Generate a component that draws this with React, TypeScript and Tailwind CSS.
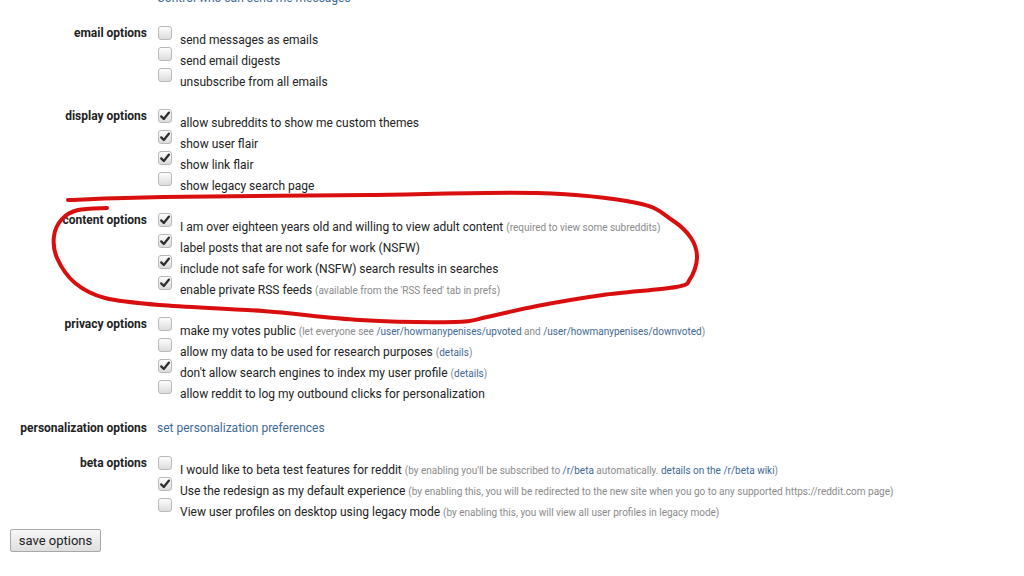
import React from "react";

type Part = { t: string; kind?: "note" | "link" };
type Opt = { checked: boolean; parts: Part[] };
type Section = { label: string; options?: Opt[]; link?: string };

const n = (t: string): Part => ({ t, kind: "note" });
const l = (t: string): Part => ({ t, kind: "link" });

const sections: Section[] = [
  {
    label: "email options",
    options: [
      { checked: false, parts: [{ t: "send messages as emails" }] },
      { checked: false, parts: [{ t: "send email digests" }] },
      { checked: false, parts: [{ t: "unsubscribe from all emails" }] },
    ],
  },
  {
    label: "display options",
    options: [
      { checked: true, parts: [{ t: "allow subreddits to show me custom themes" }] },
      { checked: true, parts: [{ t: "show user flair" }] },
      { checked: true, parts: [{ t: "show link flair" }] },
      { checked: false, parts: [{ t: "show legacy search page" }] },
    ],
  },
  {
    label: "content options",
    options: [
      { checked: true, parts: [{ t: "I am over eighteen years old and willing to view adult content " }, n("(required to view some subreddits)")] },
      { checked: true, parts: [{ t: "label posts that are not safe for work (NSFW)" }] },
      { checked: true, parts: [{ t: "include not safe for work (NSFW) search results in searches" }] },
      { checked: true, parts: [{ t: "enable private RSS feeds " }, n("(available from the 'RSS feed' tab in prefs)")] },
    ],
  },
  {
    label: "privacy options",
    options: [
      {
        checked: false,
        parts: [
          { t: "make my votes public " },
          n("(let everyone see "),
          l("/user/howmanypenises/upvoted"),
          n(" and "),
          l("/user/howmanypenises/downvoted"),
          n(")"),
        ],
      },
      { checked: false, parts: [{ t: "allow my data to be used for research purposes " }, n("("), l("details"), n(")")] },
      { checked: true, parts: [{ t: "don't allow search engines to index my user profile " }, n("("), l("details"), n(")")] },
      { checked: false, parts: [{ t: "allow reddit to log my outbound clicks for personalization" }] },
    ],
  },
  { label: "personalization options", link: "set personalization preferences" },
  {
    label: "beta options",
    options: [
      {
        checked: false,
        parts: [
          { t: "I would like to beta test features for reddit " },
          n("(by enabling you'll be subscribed to "),
          l("/r/beta"),
          n(" automatically. "),
          l("details on the /r/beta wiki"),
          n(")"),
        ],
      },
      {
        checked: true,
        parts: [
          { t: "Use the redesign as my default experience " },
          n("(by enabling this, you will be redirected to the new site when you go to any supported https://reddit.com page)"),
        ],
      },
      {
        checked: false,
        parts: [
          { t: "View user profiles on desktop using legacy mode " },
          n("(by enabling this, you will view all user profiles in legacy mode)"),
        ],
      },
    ],
  },
];

// hand-drawn marker loop, smoothed through these points
const loop: [number, number][] = [
  [68, 200], [163, 197], [370, 195], [537, 193], [637, 203], [672, 220], [691, 238],
  [697, 258], [690, 279], [676, 287], [603, 295], [537, 306], [487, 317], [455, 322],
  [360, 320], [263, 311], [160, 305], [105, 298], [75, 283], [57, 258], [54, 236],
  [62, 219], [78, 210], [107, 208],
];

function smooth(pts: [number, number][]) {
  let d = `M${pts[0][0]} ${pts[0][1]}`;
  for (let i = 0; i < pts.length - 1; i++) {
    const p0 = pts[i - 1] || pts[i];
    const p1 = pts[i];
    const p2 = pts[i + 1];
    const p3 = pts[i + 2] || p2;
    const c1 = [p1[0] + (p2[0] - p0[0]) / 6, p1[1] + (p2[1] - p0[1]) / 6];
    const c2 = [p2[0] - (p3[0] - p1[0]) / 6, p2[1] - (p3[1] - p1[1]) / 6];
    d += ` C${c1[0]} ${c1[1]} ${c2[0]} ${c2[1]} ${p2[0]} ${p2[1]}`;
  }
  return d;
}

function Checkbox({ checked }: { checked: boolean }) {
  return (
    <span className="relative ml-px h-[14px] w-[14px] shrink-0 rounded-[3px] border border-[#b9b9b9] bg-gradient-to-b from-[#fdfdfd] to-[#dcdcdc]">
      {checked && (
        <svg viewBox="0 0 14 14" className="absolute -left-px -top-px h-[14px] w-[14px]">
          <path d="M3.2 7.4 L5.8 10 L11 3.6" fill="none" stroke="#2f2f2f" strokeWidth="2.3" strokeLinecap="round" strokeLinejoin="round" />
        </svg>
      )}
    </span>
  );
}

function Row({ opt }: { opt: Opt }) {
  return (
    <div className="flex h-[21px] items-start gap-2">
      <Checkbox checked={opt.checked} />
      <span className="whitespace-nowrap pt-[6px] text-[12px] leading-[16px] text-[#222]">
        {opt.parts.map((p, i) =>
          p.kind === "note" ? (
            <span key={i} className="text-[10px] text-[#8a8a8a]">{p.t}</span>
          ) : p.kind === "link" ? (
            <span key={i} className="text-[10px] text-[#3e6994]">{p.t}</span>
          ) : (
            <span key={i}>{p.t}</span>
          )
        )}
      </span>
    </div>
  );
}

export default function App() {
  return (
    <div className="relative h-[576px] w-[1024px] overflow-hidden bg-white" style={{ fontFamily: "Roboto, 'Noto Sans', sans-serif" }}>
      <div className="flex flex-col gap-5">
        <div className="-mt-[10px] h-4 pl-[157px] text-[12px] leading-[16px] text-[#3e6994]">Control who can send me messages</div>

        {sections.map((s) => (
          <div key={s.label} className="flex gap-[10px]">
            <div className="w-[147px] shrink-0 text-right text-[12px] font-bold leading-[14px] text-[#222]">{s.label}</div>
            {s.link ? (
              <div className="h-[15px] text-[12px] leading-[14px] text-[#3e6994]">{s.link}</div>
            ) : (
              <div className="flex flex-col">
                {s.options!.map((o, i) => (
                  <Row key={i} opt={o} />
                ))}
              </div>
            )}
          </div>
        ))}
      </div>

      <button className="ml-[10px] mt-[10px] block h-[23px] w-[91px] rounded-[2px] border border-[#a8a8a8] bg-gradient-to-b from-[#f8f8f8] to-[#dedede] text-[13px] leading-[20px] text-[#222]">
        save options
      </button>

      {/* red marker loop drawn over the content options */}
      <svg className="pointer-events-none absolute left-0 top-0" width="1024" height="576" viewBox="0 0 1024 576">
        <path d={smooth(loop)} fill="none" stroke="#d90f0f" strokeWidth="4" strokeLinecap="round" strokeLinejoin="round" />
      </svg>
    </div>
  );
}
